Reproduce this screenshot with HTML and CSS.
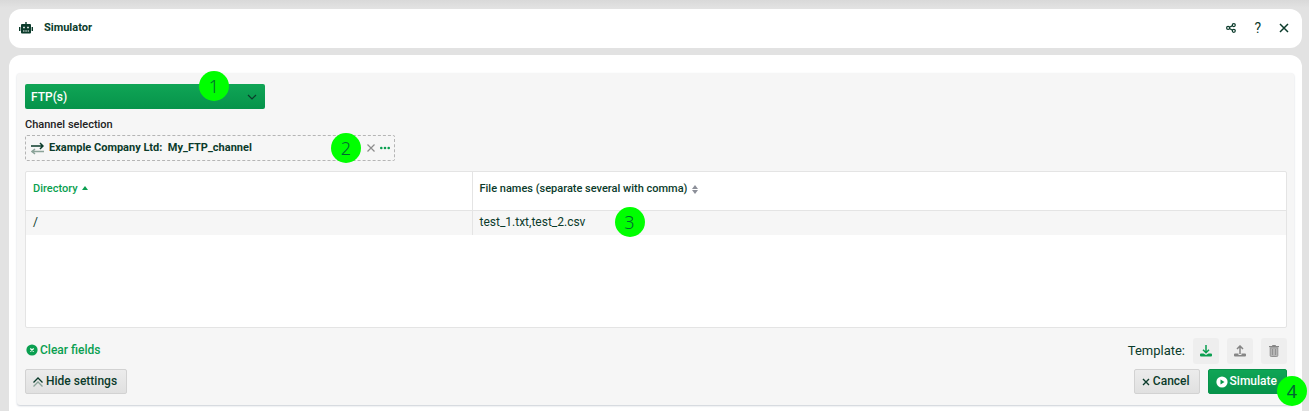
FILE: index.html
```html
<!DOCTYPE html>
<html lang="en">
<head>
    <meta charset="UTF-8">
    <meta name="viewport" content="width=device-width, initial-scale=1.0">
    <title>Simulator</title>
    <link rel="stylesheet" href="styles.css">
</head>
<body>
    <header class="titlebar">
        <svg class="robot" width="14" height="12" viewBox="0 0 14 12">
            <path fill="#0b3b2b" fill-rule="evenodd" d="M6.300 0h1.400v2H11a1 1 0 0 1 1 1v7.500a1 1 0 0 1-1 1H3a1 1 0 0 1-1-1V3a1 1 0 0 1 1-1h3.300zM4.200 4.700v1.600h1.600v-1.600zM8.200 4.700v1.600h1.600v-1.600zM4 8.500v1h1.500v-1zM6.300 8.500v1h1.500v-1zM8.600 8.500v1H10v-1zM0 5h1.400v4H0zM12.600 5H14v4h-1.400z"/>
        </svg>
        <h1>Simulator</h1>
        <nav class="tools">
            <button type="button" aria-label="Share">
                <svg width="10" height="10" viewBox="0 0 10 10" fill="none" stroke="#0b3b2b" stroke-width="1.200">
                    <path d="M3.500 4.200L6.500 2.600M3.500 5.500L6.500 7.200"/>
                    <circle cx="2.100" cy="4.900" r="1.500"/>
                    <circle cx="7.800" cy="2.100" r="1.500"/>
                    <circle cx="7.800" cy="7.800" r="1.500"/>
                </svg>
            </button>
            <button type="button" class="help" aria-label="Help">?</button>
            <button type="button" aria-label="Close">
                <svg width="10" height="10" viewBox="0 0 10 10" fill="none" stroke="#0b3b2b" stroke-width="1.500">
                    <path d="M1 1l8 8M9 1L1 9"/>
                </svg>
            </button>
        </nav>
    </header>

    <main class="card">
        <form class="panel">
            <div class="protocol">
                <select aria-label="Protocol">
                    <option>FTP(s)</option>
                </select>
                <svg class="chevron" width="10" height="6" viewBox="0 0 10 6" fill="none" stroke="#0b3b2b" stroke-width="1.200">
                    <path d="M1 1l4 4 4-4"/>
                </svg>
                <span class="step step-1">1</span>
            </div>

            <label class="caption" for="channel">Channel selection</label>
            <div class="channel">
                <svg width="13" height="13" viewBox="0 0 13 13" fill="none" stroke-width="1.500">
                    <path stroke="#0b3b2b" d="M0 4h12M9 1l3 3-3 3"/>
                    <path stroke="#8ba399" d="M13 9.500H1M4 7L1 9.500 4 12"/>
                </svg>
                <input id="channel" type="text" value="Example Company Ltd:  My_FTP_channel" readonly>
                <button type="button" aria-label="Remove channel">
                    <svg width="8" height="8" viewBox="0 0 8 8" fill="none" stroke="#8c8c8c" stroke-width="1.200">
                        <path d="M.500.500l7 7M7.500.500l-7 7"/>
                    </svg>
                </button>
                <button type="button" aria-label="Choose channel">
                    <svg width="10" height="4" viewBox="0 0 10 4" fill="#0a9f50">
                        <circle cx="1.300" cy="2" r="1.300"/>
                        <circle cx="5" cy="2" r="1.300"/>
                        <circle cx="8.700" cy="2" r="1.300"/>
                    </svg>
                </button>
                <span class="step step-2">2</span>
            </div>

            <div class="grid">
                <table>
                    <colgroup>
                        <col class="col-directory">
                        <col>
                    </colgroup>
                    <thead>
                        <tr>
                            <th class="sorted">Directory
                                <svg width="6" height="4" viewBox="0 0 6 4"><path fill="#0a9f50" d="M3 0l3 4H0z"/></svg>
                            </th>
                            <th>File names (separate several with comma)
                                <svg class="sorter" width="6" height="9" viewBox="0 0 6 9"><path fill="#8c8f99" d="M3 0l3 4H0zM0 5h6L3 9z"/></svg>
                            </th>
                        </tr>
                    </thead>
                    <tbody>
                        <tr>
                            <td>/</td>
                            <td><span class="files">test_1.txt,test_2.csv<span class="step step-3">3</span></span></td>
                        </tr>
                    </tbody>
                </table>
            </div>

            <div class="row">
                <button type="reset" class="clear">
                    <svg width="12" height="12" viewBox="0 0 12 12">
                        <circle cx="6" cy="6" r="5.600" fill="#0a9f50"/>
                        <path stroke="#fff" stroke-width="1.300" d="M4.300 4.500l3.400 3M7.700 4.500l-3.400 3"/>
                    </svg>
                    Clear fields
                </button>
                <div class="template">
                    <span>Template:</span>
                    <button type="button" aria-label="Download template">
                        <svg width="12" height="12" viewBox="0 0 12 12">
                            <path fill="none" stroke="#0a9f50" stroke-width="1.500" d="M6 0v7.500M3 4.700l3 3 3-3"/>
                            <path fill="#0a9f50" d="M1 8.500h2.500L6 10l2.500-1.500H11a1 1 0 0 1 1 1v1a1 1 0 0 1-1 1H1a1 1 0 0 1-1-1v-1a1 1 0 0 1 1-1z"/>
                        </svg>
                    </button>
                    <button type="button" aria-label="Upload template">
                        <svg width="12" height="12" viewBox="0 0 12 12">
                            <path fill="none" stroke="#858585" stroke-width="1.500" d="M6 9V1M3 4l3-3 3 3"/>
                            <path fill="#858585" d="M1 8.500h3.500V10h3V8.500H11a1 1 0 0 1 1 1v1a1 1 0 0 1-1 1H1a1 1 0 0 1-1-1v-1a1 1 0 0 1 1-1z"/>
                        </svg>
                    </button>
                    <button type="button" aria-label="Delete template">
                        <svg width="10" height="12" viewBox="0 0 10 12">
                            <path fill="#858585" d="M3.200 0h3.600v1H10v1.300H0V1h3.200z"/>
                            <path fill="#b5b5b5" stroke="#929292" d="M1.200 2.800h7.600v7.700a1 1 0 0 1-1 1H2.200a1 1 0 0 1-1-1z"/>
                            <path stroke="#929292" d="M3.500 4v6M6.500 4v6"/>
                        </svg>
                    </button>
                </div>
            </div>

            <div class="row actions">
                <button type="button" class="btn">
                    <svg width="10" height="10" viewBox="0 0 10 10" fill="none" stroke-width="1.300">
                        <path stroke="#0b3b2b" d="M.500 5.500L5 1l4.500 4.500"/>
                        <path stroke="#8ba399" d="M.500 9.500L5 5l4.500 4.500"/>
                    </svg>
                    Hide settings
                </button>
                <div class="submit">
                    <button type="button" class="btn">
                        <svg width="8" height="8" viewBox="0 0 8 8" fill="none" stroke="#0b3b2b" stroke-width="1.400">
                            <path d="M1 1l6 6M7 1L1 7"/>
                        </svg>
                        Cancel
                    </button>
                    <button type="submit" class="btn primary">
                        <svg width="12" height="12" viewBox="0 0 12 12">
                            <circle cx="6" cy="6" r="5.600" fill="#fff"/>
                            <path fill="#06994b" d="M4.500 3.500L8.500 6l-4 2.500z"/>
                        </svg>
                        Simulate
                    </button>
                    <span class="step step-4">4</span>
                </div>
            </div>
        </form>
    </main>
</body>
</html>
```
FILE: styles.css
```css
* {
    box-sizing: border-box;
}
body {
    display: flex;
    flex-direction: column;
    gap: 7px;
    min-height: 100vh;
    margin: 0;
    padding: 9px 7px 0 9px;
    background: linear-gradient(#d9d9d9, #e2e2e2 8px);
    color: #0b3b2b;
    font-family: Roboto, "Liberation Sans", sans-serif;
    font-size: 12px;
    line-height: 16px;
}
button,
input,
select {
    margin: 0;
    padding: 0;
    border: 0;
    background: none;
    color: inherit;
    font: inherit;
}
button {
    display: flex;
    align-items: center;
    justify-content: center;
}
.titlebar {
    display: flex;
    align-items: center;
    height: 39px;
    padding: 0 13px 1px 10px;
    border-radius: 12px;
    background: #fff;
}
.titlebar h1 {
    margin: 0 0 0 11px;
    font-size: 11px;
    font-weight: 700;
}
.tools {
    display: flex;
    gap: 18px;
    margin-left: auto;
}
.tools .help {
    font-size: 14px;
}
.card {
    flex: 1;
    padding: 18px 8px 6px;
    border-radius: 12px 12px 0 0;
    background: #fff;
}
.panel {
    padding: 11px 7px 11px 8px;
    border-radius: 3px;
    background: #f6f6f6;
    box-shadow: 0 1px 2px #c9ced6;
}
.protocol {
    position: relative;
    width: 240px;
}
.protocol select {
    display: block;
    width: 100%;
    height: 25px;
    padding: 0 6px;
    appearance: none;
    border-radius: 2px;
    background: linear-gradient(#10a556, #06934a);
    color: #fff;
    font-weight: 500;
}
.chevron {
    position: absolute;
    top: 10px;
    right: 8px;
}
.caption {
    display: block;
    width: max-content;
    margin: 8px 0 2px;
    color: #222;
    font-size: 11px;
    font-weight: 500;
}
.channel {
    position: relative;
    display: flex;
    align-items: center;
    gap: 5px;
    width: 370px;
    height: 26px;
    padding: 0 4px 0 5px;
    border: 1px dashed #b5b5b5;
    border-radius: 2px;
}
.channel input {
    flex: 1;
    font-size: 11px;
    font-weight: 700;
    white-space: pre;
}
.grid {
    height: 157px;
    margin: 10px 0;
    border: 1px solid #e4e4e4;
    border-radius: 2px;
    background: #fff;
}
table {
    width: 100%;
    border-collapse: collapse;
    table-layout: fixed;
}
.col-directory {
    width: 446px;
}
th,
td {
    padding: 0 7px;
    text-align: left;
}
th {
    height: 38px;
    padding-bottom: 4px;
    font-size: 11px;
    font-weight: 500;
}
th + th,
td + td {
    border-left: 1px solid #e4e4e4;
}
th svg {
    margin-left: 2px;
    vertical-align: 2px;
}
th .sorter {
    vertical-align: -2px;
}
.sorted {
    color: #0a9f50;
}
td {
    height: 25px;
    padding-bottom: 1px;
    border-top: 1px solid #e4e4e4;
    background: #f6f6f6;
}
.files {
    position: relative;
}
.row {
    display: flex;
    justify-content: space-between;
}
.clear {
    gap: 2px;
    height: 24px;
    padding-left: 1px;
    color: #0a9f50;
    font-weight: 500;
}
.template {
    display: flex;
    align-items: center;
    gap: 8px;
    font-size: 13px;
}
.template button {
    width: 26px;
    height: 26px;
    border-radius: 3px;
    background: #eee;
}
.actions {
    margin-top: 5px;
}
.submit {
    position: relative;
    display: flex;
    gap: 8px;
}
.btn {
    gap: 3px;
    height: 25px;
    padding: 0 9px 2px 7px;
    border: 1px solid #d2d2d2;
    border-radius: 2px;
    background: linear-gradient(#ececec, #e0e0e0);
    font-weight: 500;
}
.btn svg {
    margin-top: 3px;
}
.primary {
    gap: 2px;
    border-color: #06934a;
    background: linear-gradient(#10a556, #06934a);
    color: #fff;
}
/* numbered markers drawn over the form */
.step {
    position: absolute;
    width: 30px;
    height: 30px;
    border-radius: 50%;
    background: #0f0;
    color: #063;
    font-family: "Noto Sans", sans-serif;
    font-size: 18px;
    font-weight: 300;
    line-height: 30px;
    text-align: center;
}
.step-1 {
    top: -13px;
    right: 36px;
}
.step-2 {
    top: -3px;
    right: 33px;
}
.step-3 {
    top: -8px;
    left: 135px;
}
.step-4 {
    top: 7px;
    right: -20px;
    font-weight: 400;
}
```
